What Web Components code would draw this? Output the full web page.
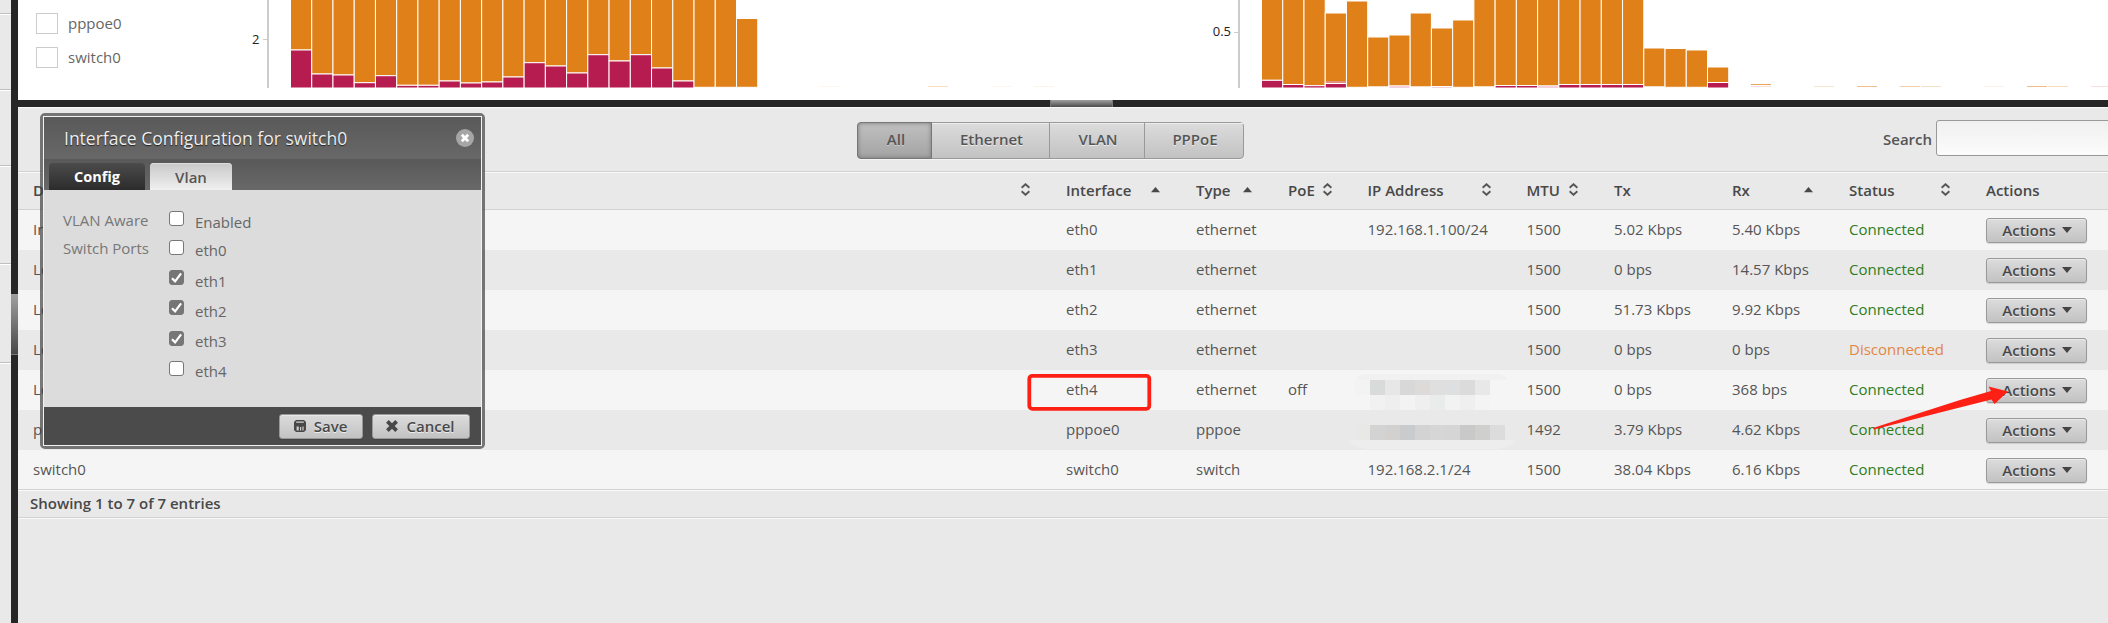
<!DOCTYPE html>
<html lang="en">
<head>
<meta charset="utf-8">
<title>Dashboard</title>
<style>
html,body{margin:0;height:100%;overflow:hidden}
body{font:15px/20px "Open Sans",sans-serif;color:#555;background:#e9e9e9}
</style>
</head>
<body>
<edge-dashboard></edge-dashboard>
<script>
const define = (name, render) => customElements.define(name, class extends HTMLElement {
  connectedCallback() {
    if (this.shadowRoot) return;
    this.attachShadow({ mode: 'open' }).innerHTML = render(this);
  }
});

/* Horizontal rules of the collapsed side navigation, and the vertical splitter */
define('side-rail', () => `<style>
:host{display:grid;grid-template-columns:11px 7px;height:623px}
.nav{display:grid;grid-template-rows:14px 76px 76px 98px 99px 1fr}
.nav i{border-bottom:1px solid #c0c0c0;box-shadow:0 1px #fff}
.nav i:last-child{border:0}
.bar{background:#262626;padding-top:294px}
.grip{height:60px;background:linear-gradient(#a0a0a0,#484848);border-bottom:1px solid #777}
</style><div class="nav"><i></i><i></i><i></i><i></i><i></i><i></i></div><div class="bar"><div class="grip"></div></div>`);

define('legend-item', () => `<style>
:host{display:flex;gap:10px;height:21px;margin-bottom:13px;font-size:15px;line-height:21px;color:#666}
i{width:20px;height:19px;border:1px solid #ccc;background:#fff}
</style><i></i><span><slot></slot></span>`);

/* Stacked bar chart: the tall series is orange, the small one crimson */
define('traffic-chart', el => {
  const D = {
    a: { axis: 267, x0: 291, label: '2', lx: 259.5, ly: 44, tick: 39.5,
      top: Array(21).fill(-5).concat([18.5]),
      low: [50,74,75,82.7,75.7,85.3,85.3,81,83,82,77,62.7,66,73,54.7,61,54.7,68,81,88,88,88], marks: [] },
    b: { axis: 1238, x0: 1262, label: '0.5', lx: 1231, ly: 36, tick: 32.5,
      top: [-5,-5,-5,13,1,37,35,13,28,20,-5,-5,-5,-5,-5,-5,-5,-5,48,48.5,50,67],
      low: [80.3,84.5,85.7,83.5,88,87,86,87,86.5,88,87,85.5,85.5,86,84.5,84.5,84.5,84.5,87,88,88,82.5],
      marks: [[928,86,'#f8dfc2'],[820,86,'#fdf7ef'],[992,86,'#fdf6ee'],[1034,86,'#fdf4ea'],[1751,84,'#e8a45c'],[1751,86,'#f9dfdc'],[1814,86,'#f9e6d2'],[1857,86,'#f0c08e'],[1900,86,'#f3cda4'],[1921,86,'#f7dfc5'],[1984,86,'#fdf0ea'],[2027,86,'#efbd8a'],[2048,86,'#f6dcc0'],[2091,86,'#f9dfdf']] } };
  let s = '';
  for (const c of [D.a, D.b]) {
    s += `<rect x="${c.axis}" y="0" width="2" height="88" fill="#ccc"/><path d="M${c.axis-4} ${c.tick}h4" stroke="#ccc"/>`;
    s += `<text x="${c.lx}" y="${c.ly}" text-anchor="end">${c.label}</text>`;
    c.top.forEach((t, i) => {
      const x = c.x0 - .5 + i * 21.238, l = c.low[i];
      s += `<rect class="o" x="${x}" y="${t}" width="21.24" height="${Math.min(l,87.3) - t}"/>`;
      if (l < 88) s += `<rect class="${l > 85.7 ? 'p' : 'c'}" x="${x}" y="${l}" width="21.24" height="${88 - l}"/>`;
    });
    for (const [x, y, f] of c.marks) s += `<rect x="${x}" y="${y}" width="20" height="1" fill="${f}"/>`;
  }
  s += '<rect x="1326" y="81" width="20" height="2" fill="#e3917c"/>';
  return `<style>:host{display:block;height:100px}svg{display:block}
.o,.c,.p{stroke:#fff;stroke-width:1}.o{fill:#e08019}.c{fill:#b71c50}.p{fill:#e7a3bd}
text{font:13px "Open Sans",sans-serif;fill:#222}</style><svg width="2090" height="100" viewBox="18 0 2090 100">${s}</svg>`;
});

define('split-bar', () => `<style>
:host{display:flex;height:7px;background:#262626;border-bottom:1px solid #f8f8f8}
i{width:61px;margin-left:1032px;border:solid #777;border-width:0 1px;background:linear-gradient(#a0a0a0,#4c4c4c)}
</style><i></i>`);

define('filter-tabs', () => `<style>
:host{display:grid;grid-template-columns:73px 118px 95px 99px;height:35px;border:1px solid #999;border-radius:4px;background:linear-gradient(#dcdcdc,#c2c2c2);box-shadow:0 1px #f4f4f4;font-weight:600;text-shadow:0 1px #eee;line-height:33px;text-align:center}
span{border-left:1px solid #999;padding-left:2px;box-shadow:inset 0 1px #eee;box-sizing:border-box}
span.on{margin:-1px -1px -1px -1px;padding-left:3px;line-height:33px;border:1px solid #777;border-radius:4px 0 0 4px;background:linear-gradient(#c0c0c0,#a3a3a3);box-shadow:inset 0 0 4px #777;text-shadow:0 1px #ccc;z-index:1}
</style><span class="on">All</span><span>Ethernet</span><span>VLAN</span><span>PPPoE</span>`);

define('search-box', () => `<style>
:host{display:flex;font-weight:600}
label{padding-top:9px;margin-right:5px;width:48px}
i{width:200px;height:34px;border:1px solid #999;border-radius:3px;background:linear-gradient(#f0f0f0,#fcfcfc)}
</style><label>Search</label><i></i>`);

define('ui-button', el => {
  const icons = {
    save: '<svg width="12" height="12" viewBox="0 0 12 12"><path fill="#484848" fill-rule="evenodd" d="M2 0h8l2 2v8l-2 2H2l-2-2V2zM2.200 1.600v1.200h7.600V1.600zM2.600 6.400v4h2.200v-4zM6 7v3.400h1.200V7zM8.400 6.400v4h1.200v-4z"/></svg>',
    cancel: '<svg width="12" height="12" viewBox="0 0 12 12"><path stroke="#484848" stroke-width="3.8" d="M1.4 1.4l9.2 9.2M10.6 1.4l-9.2 9.2"/></svg>'
  };
  const ic = icons[el.getAttribute('icon')];
  return `<style>
:host{display:flex;align-items:center;justify-content:center;gap:9px;box-sizing:border-box;height:25px;padding:0 0 1px ${ic ? 0 : 2}px;border:1px solid #999;border-radius:3px;background:linear-gradient(#dcdcdc,#c2c2c2);box-shadow:inset 0 1px #e9e9e9,0 1px 1px rgba(0,0,0,.12);color:#484848;font-weight:600;text-shadow:0 1px #eee}
:host([icon]){gap:8px;padding-right:1px}
b{width:0;border:5px solid transparent;border-top:6px solid #444;border-bottom:0;margin:0 1px 0 -3px}
svg{overflow:hidden}
</style>${ic || ''}<slot></slot>${ic ? '' : '<b></b>'}`;
});

define('sort-mark', el => `<style>:host{display:block;width:9px;height:13px}svg{display:block}</style>` + (el.hasAttribute('up')
  ? '<svg width="9" height="13"><path fill="#484848" d="M0 9.2L4.5 4 9 9.2z"/></svg>'
  : '<svg width="9" height="13" fill="none" stroke="#555" stroke-width="1.9"><path d="M.6 4.7l3.9-3.5 3.900 3.500M.6 8.300l3.900 3.500 3.900-3.500"/></svg>'));

/* The dialog covers the description column up to its first letters */
define('interface-table', () => {
  const cols = [['D','s'],['Interface','u'],['Type','u'],['PoE','s'],['IP Address','s'],['MTU','s'],['Tx',''],['Rx','u'],['Status','s'],['Actions','']];
  const rows = [
    ['In','eth0','ethernet','','192.168.1.100/24','1500','5.02 Kbps','5.40 Kbps','Connected'],
    ['Lo','eth1','ethernet','','','1500','0 bps','14.57 Kbps','Connected'],
    ['Lo','eth2','ethernet','','','1500','51.73 Kbps','9.92 Kbps','Connected'],
    ['Lo','eth3','ethernet','','','1500','0 bps','0 bps','Disconnected'],
    ['Lo','eth4','ethernet','off','','1500','0 bps','368 bps','Connected'],
    ['pp','pppoe0','pppoe','','','1492','3.79 Kbps','4.62 Kbps','Connected'],
    ['switch0','switch0','switch','','192.168.2.1/24','1500','38.04 Kbps','6.16 Kbps','Connected']];
  return `<style>
:host{display:block}
.r{display:grid;grid-template-columns:1033px 130px 92px 79.500px 159px 87.500px 118px 117px 137px 137px;height:40px;align-items:center;background:#e9e9e9}
.r>*{padding:0 0 2px 15px;white-space:nowrap}
.r.alt{background:#f5f5f5}
.h{height:36px;border-top:1px solid #fafafa;border-bottom:1px solid #d2d2d2;box-shadow:0 -1px #d2d2d2;font-weight:600;color:#484848}
.h>div{display:flex;justify-content:space-between;align-items:center;padding-right:21px}
.h sort-mark{margin-top:-1px}
.r .act{padding:0 21px 0 15px}
.Connected{color:#2f7d20}.Disconnected{color:#e28743}
.f{height:26px;line-height:25px;border-top:1px solid #fafafa;border-bottom:1px solid #d2d2d2;box-shadow:0 -1px #d2d2d2,0 1px #f8f8f8;padding-left:12px;font-weight:600;color:#484848}
</style><div class="r h">${cols.map(([t,k]) => `<div>${t}${k ? `<sort-mark ${k=='u'?'up':''}></sort-mark>` : ''}</div>`).join('')}</div>
${rows.map((r,n) => `<div class="r ${n%2?'':'alt'}">${r.map((t,i) => `<div class="${i==8?t:''}">${t}</div>`).join('')}<div class="act"><ui-button>Actions</ui-button></div></div>`).join('')}
<div class="f">Showing 1 to 7 of 7 entries</div>`;
});

define('check-row', el => `<style>
:host{display:grid;grid-template-columns:106px 26px 1fr;color:#666}
.n{color:#777;white-space:nowrap;margin-top:-2px}
i{width:13px;height:13px;border:1px solid #777;border-radius:3px;background:#fff;margin-top:-1px}
:host([low]) i{margin-top:0}
i.on{background:#767676}
svg{display:block}
</style><div class="n">${el.getAttribute('name') || ''}</div><i class="${el.hasAttribute('on') ? 'on' : ''}">${el.hasAttribute('on') ? '<svg width="13" height="13"><path d="M2 7.2l3.1 3.1 6-8" fill="none" stroke="#fff" stroke-width="2.2"/></svg>' : ''}</i><span><slot></slot></span>`);

define('config-dialog', () => `<style>
:host{display:block;box-sizing:border-box;width:445px;height:336px;border:3px solid rgba(60,60,60,.68);border-radius:5px}
.in{display:grid;grid-template-rows:42px 31px 217px 38px;height:328px;border:1px solid #f2f2f2}
.t{display:flex;justify-content:space-between;align-items:center;padding:0 7px 1px 20px;background:linear-gradient(#595959,#686868);color:#eee;font-size:17.5px;text-shadow:0 1px 1px #222}
.tabs{display:flex;align-items:flex-end;gap:5px;padding-left:5px;background:linear-gradient(#595959,#686868)}
.tabs span{text-align:center;border-radius:4px 4px 0 0;line-height:28px}
.c{width:96px;height:27px;background:linear-gradient(#4b4b4b,#2c2c2c);color:#fff;font-weight:700;font-size:14.5px}
.v{width:82px;height:27px;background:linear-gradient(#c8c8c8,#f0f0f0);color:#555;font-weight:600;box-shadow:inset 0 1px #ddd}
.b{background:#dcdcdc;padding:22px 0 0 19px;display:grid;grid-template-rows:28px 30.500px 30px 30px 30px 30px;align-content:start}
.f{background:#4b4b4b;display:flex;justify-content:flex-end;gap:9px;padding:7px 11px 0 0}
</style><div class="in"><div class="t"><span>Interface Configuration for switch0</span><svg width="18" height="18"><circle cx="9" cy="9" r="9" fill="#a6a6a6"/><path d="M5.8 5.8l6.4 6.4M12.2 5.8l-6.4 6.4" stroke="#fff" stroke-width="2.8"/></svg></div>
<div class="tabs"><span class="c">Config</span><span class="v">Vlan</span></div>
<div class="b"><check-row name="VLAN Aware">Enabled</check-row><check-row low name="Switch Ports">eth0</check-row><check-row on>eth1</check-row><check-row on>eth2</check-row><check-row low on>eth3</check-row><check-row low>eth4</check-row></div>
<div class="f"><ui-button icon="save" style="width:84px">Save</ui-button><ui-button icon="cancel" style="width:98px">Cancel</ui-button></div></div>`);

/* Highlight frame, pointer arrow and mosaic laid over the table */
define('page-marks', () => {
  let s = '<path fill="#f1f1f1" d="M1355 380q3-6 14-6h125q12 0 14 6z"/><path fill="#ededed" d="M1347 440h170q-8 9-22 9h-126q-14 0-22-9z"/>';
  const put = (y, x, list) => list.forEach((c, i) => s += `<rect x="${x + i*15}" y="${y}" width="15" height="15" fill="${c}"/>`);
  put(380, 1355, ['#f3f3f3','#d9dada','#e7e7e7','#d8d8d8','#dcdbda','#dfdfdf','#dedfe0','#dbdbdb','#e8e8e8']);
  put(395, 1370, ['#f1f1f1','#eee','#f3f3f3','#efefef','#eaeceb','#f2f2f2','#efefef','#f4f4f4']);
  put(425, 1355, ['#e8e8e7','#d3d3d3','#d3d0d0','#cacbcc','#d3d3d3','#d6d6d6','#d5d5d5','#c9c9c9','#cfcfcd','#dcdcdc']);
  return `<style>:host{display:block;pointer-events:none}svg{display:block}</style><svg width="2108" height="623"><g shape-rendering="crispEdges">${s}</g>
<rect x="1029.300" y="375.800" width="120" height="33" rx="3" fill="none" stroke="#ff2015" stroke-width="3.800"/>
<path fill="#ff2015" d="M1873 428L1960 400 1991 391 1988.500 386.500 2008 391.500 1994.500 404 1991.500 399.500 1940 412.500 1874 429.500z"/></svg>`;
});

define('edge-dashboard', () => `<style>
:host{display:grid;grid-template-columns:18px 1fr;width:2108px;height:623px;position:relative;overflow:hidden}
.top{display:grid;grid-template:100px / 0 1fr;background:#fff}
.legend{padding:13px 0 0 18px;width:200px;box-sizing:border-box;z-index:1}
.tools{display:grid;grid-template-columns:839px 1026px 1fr;height:64px;align-items:start}
.tools filter-tabs{width:385px;margin-top:14px}
.tools search-box{margin-top:12px}
main{min-width:0;overflow:hidden}
config-dialog{position:absolute;left:40px;top:113px}
page-marks{position:absolute;left:0;top:0}
</style><side-rail></side-rail><main><div class="top"><div class="legend"><legend-item>pppoe0</legend-item><legend-item>switch0</legend-item></div><traffic-chart></traffic-chart></div>
<split-bar></split-bar>
<div class="tools"><span></span><filter-tabs></filter-tabs><search-box></search-box></div>
<interface-table></interface-table></main>
<config-dialog></config-dialog><page-marks></page-marks>`);
</script>
</body>
</html>
